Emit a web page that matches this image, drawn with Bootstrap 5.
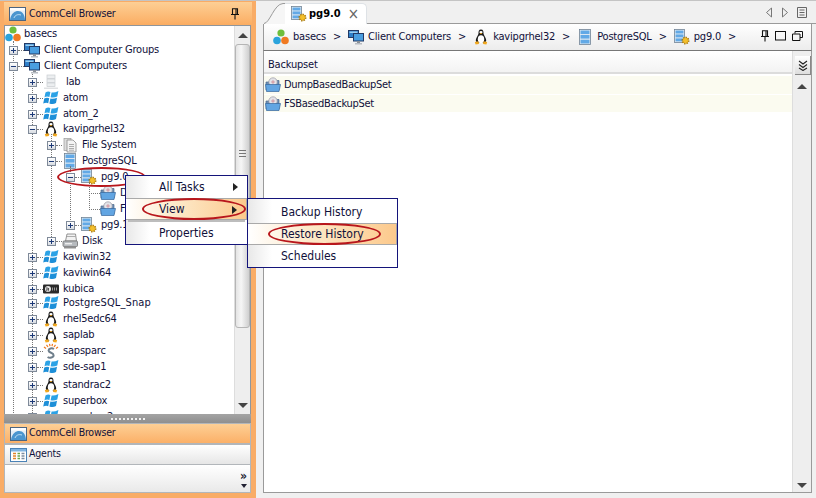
<!DOCTYPE html>
<html lang="en">
<head>
  <meta charset="UTF-8">
  <title>CommCell Browser</title>
  <link rel="stylesheet" href="https://cdn.jsdelivr.net/npm/bootstrap@5.3.0/dist/css/bootstrap.min.css">
  <style>
    body { margin: 0; background: #f0f0f0; font-family: "DejaVu Sans Condensed", "DejaVu Sans", sans-serif; font-stretch: condensed; font-size: 11px; color: #10103a; overflow: hidden; }
    .shell { width: 816px; height: 498px; position: relative; }
    .left-pane { width: 256px; height: 498px; background: #f9ac66; padding: 1px 5px 5px 4px; border-top: 1px solid #c4c4c4; }
    .pane-head { height: 23px; margin: 0 -1px 0 0; background: linear-gradient(#fdcf95, #fbad62); padding: 0 12px 0 5px; gap: 3px; color: #10103a; font-size: 10.5px; letter-spacing: -.2px; }
    .tree-box { height: 389px; background: #fff; border: 1px solid #8f959b; border-bottom: 0; overflow: hidden; }
    .tree-body { width: 230px; position: relative; overflow: hidden; }
    .tr-row { height: 16px; white-space: nowrap; letter-spacing: -.2px; }
    .up1 { margin-top: -1px; }
    .up2 { margin-top: -2px; letter-spacing: .1px; }
    .dn2 { margin-top: 2px; }
    .lv0 { padding-left: 0; }
    .lv1 { padding-left: 4px; }
    .lv2 { padding-left: 23px; }
    .lv3 { padding-left: 42px; }
    .lv4 { padding-left: 61px; }
    .lv5 { padding-left: 80px; }
    .tr-exp { width: 9px; height: 9px; flex: none; border: 1px solid #7f8a99; background: linear-gradient(#fff, #d8dce2); position: relative; }
    .tr-exp::before { content: ""; position: absolute; left: 1px; top: 3px; width: 5px; height: 1px; background: #1d3a78; }
    .tr-exp.plus::after { content: ""; position: absolute; left: 3px; top: 1px; width: 1px; height: 5px; background: #1d3a78; }
    .tr-dots { width: 6px; flex: none; border-top: 1px dotted #777; }
    .tr-none { width: 4px; flex: none; }
    .tr-none + .tr-dots { width: 11px; }
    .tr-ic { width: 16px; height: 16px; flex: none; }
    .tr-txt { margin-left: 4px; }
    .lv0 .tr-txt { margin-left: 3px; }
    .vline { position: absolute; width: 0; border-left: 1px dotted #777; }
    .vl-a { left: 8px; top: 15px; height: 376px; }
    .vl-b { left: 27px; top: 48px; height: 343px; }
    .vl-c { left: 46px; top: 108px; height: 107px; }
    .vl-d { left: 65px; top: 140px; height: 60px; }
    .vl-e { left: 84px; top: 157px; height: 27px; }
    .sbar { background: #eee; border-left: 1px solid #ddd; position: relative; }
    .left-bar { width: 16px; }
    .right-bar { width: 19px; }
    .tri-up, .tri-dn { width: 0; height: 0; border-left: 5px solid transparent; border-right: 5px solid transparent; position: absolute; left: 50%; margin-left: -5px; }
    .tri-up { border-bottom: 5px solid #444; }
    .tri-dn { border-top: 5px solid #444; }
    .left-bar .tri-up { top: 7px; }
    .left-bar .tri-dn { bottom: 6px; }
    .right-bar .tri-up { top: 33px; }
    .right-bar .tri-dn { bottom: 4px; }
    .sb-thumb { position: absolute; left: 0; right: 0; top: 18px; height: 284px; background: linear-gradient(90deg, #e4e4e4, #f6f6f6 40%, #cfcfcf); border: 1px solid #b5b5b5; border-radius: 3px; }
    .sb-grip { position: absolute; left: 3px; right: 3px; top: 105px; height: 7px; border-top: 1px solid #777; border-bottom: 1px solid #777; }
    .sb-grip::after { content: ""; position: absolute; left: 0; right: 0; top: 2px; height: 1px; background: #777; }
    .splitter { height: 9px; background: linear-gradient(#a4a4a4, #8f8f8f); gap: 2px; }
    .splitter i { width: 2px; height: 2px; background: #f2f2f2; }
    .side-list { margin-top: 0; border-radius: 0; }
    .side-list .list-group-item { height: 21px; padding: 0 0 0 5px; gap: 2px; border: 1px solid #b2b6ba; border-radius: 0; background: linear-gradient(#fff, #e6e6e6); color: #10103a; font-size: 10.5px; letter-spacing: -.2px; }
    .side-list .list-group-item.active { background: linear-gradient(#fdcf95, #fbb068); margin-top: 0; }
    .side-list .list-group-item + .list-group-item { border-top-width: 1px; margin-top: 0; }
    .side-txt { margin-bottom: 2px; }
    .side-foot { flex: 1; background: linear-gradient(#fff, #e9e9e9); border: 1px solid #b2b6ba; border-top: 0; position: relative; }
    .more-mark { position: absolute; right: 0; top: 7px; width: 13px; line-height: 9px; font-size: 12px; font-weight: bold; text-align: center; color: #223; }
    .more-mark .tri-dn { border-left-width: 3px; border-right-width: 3px; border-top: 4px solid #223; margin-left: -3px; top: 12px; }
    .right-pane { width: 560px; padding: 0 4px 5px 7px; border-top: 1px solid #c4c4c4; }
    .tab-strip { height: 23px; margin-left: 1px; border-bottom: 1px solid #9a9a9a; margin-right: -4px; padding-right: 9px; }
    .tab-strip .nav-tabs { border: 0; flex: none; }
    .tab-slant { width: 21px; height: 23px; flex: none; margin-bottom: -1px; }
    .tab-strip .nav-link { height: 21px; margin-bottom: -1px; padding: 0 0 0 6px; gap: 2px; border: 1px solid #9a9a9a; border-left: 0; border-bottom: 0; border-radius: 0 5px 0 0; background: #f6f6f6; font-weight: bold; font-size: 11px; color: #10103a; width: 82px; margin-top: 2px; }
    .tab-x { font-size: 15px; font-weight: normal; color: #666; margin-left: 5px; line-height: 1; }
    .tab-tools { gap: 8px; }
    .crumb-bar { height: 27px; border: 1px solid #9a9a9a; border-top: 0; border-bottom: 1px solid #777; background: linear-gradient(#fff, #ececec); padding: 0 8px 0 9px; }
    .crumb-bar .breadcrumb { --bs-breadcrumb-divider: ">"; --bs-breadcrumb-margin-bottom: 0; --bs-breadcrumb-item-padding-x: 7px; font-size: 11px; letter-spacing: -.2px; }
    .crumb-bar .breadcrumb-item { gap: 4px; color: #10103a; white-space: nowrap; }
    .crumb-bar .breadcrumb-item + .breadcrumb-item::before { color: #10103a; padding-right: 3px; }
    .bar-tools { gap: 5px; margin-bottom: 2px; }
    .grid-box { flex: 1; background: #fff; border: 1px solid #9a9a9a; border-top: 0; min-height: 0; }
    .grid-main { flex: 1; min-width: 0; }
    .grid-head { height: 23px; margin-bottom: 2px; padding: 7px 0 0 4px; background: linear-gradient(#fff, #f3f3f3); border-bottom: 2px solid #dcdcdc; letter-spacing: -.2px; }
    .grid-main .table { --bs-table-bg: #fbfbf0; --bs-table-border-color: #fff; margin: 0; font-size: 11px; color: #10103a; letter-spacing: -.3px; }
    .grid-main .table td { height: 18px; padding: 1px 0 0 1px; border-bottom: 1px solid #fff; border-top: 0; vertical-align: middle; color: #10103a; }
    .row-inner { gap: 3px; }
    .corner-btn { position: absolute; right: 0; top: 5px; width: 16px; height: 19px; background: linear-gradient(#fff, #ddd); border-right: 1px solid #888; border-bottom: 1px solid #888; }
    .pop-menu.dropdown-menu { --bs-dropdown-min-width: 0; --bs-dropdown-padding-y: 0; --bs-dropdown-border-radius: 0; --bs-dropdown-border-color: #14147a; --bs-dropdown-border-width: 1px; --bs-dropdown-font-size: 12px; --bs-dropdown-color: #10103a; --bs-dropdown-link-color: #10103a; --bs-dropdown-divider-margin-y: 1px; background: linear-gradient(90deg, #e8e8e8, #fff 24px); margin: 0; box-shadow: none; }
    .pop-a { position: absolute; left: 125px; top: 175px; width: 123px; height: 70px; z-index: 3; }
    .pop-b { position: absolute; left: 247px; top: 198px; width: 151px; height: 70px; z-index: 4; padding-top: 2px; }
    .pop-menu .dropdown-item { height: 22px; padding: 0 0 0 33px; background: transparent; position: relative; font-size: 12px; color: #10103a; }
    .pop-menu .dropdown-item.active { background: linear-gradient(90deg, #ffffff, #fdeacb 40%, #fcc98c); border: 1px solid #a9a9a9; border-left: 0; color: #10103a; margin-right: 2px; }
    .pop-menu hr.dropdown-divider { margin: 0 2px; border-top: 2px solid #bdbdbd; opacity: 1; }
    .sub-tri { position: absolute; right: 9px; top: 7px; width: 0; height: 0; border-top: 4px solid transparent; border-bottom: 4px solid transparent; border-left: 5px solid #222; }
    .red-ring { position: absolute; border: 2px solid #b8161c; border-radius: 50%; z-index: 5; pointer-events: none; }
    .ring-a { left: 57px; top: 167px; width: 89px; height: 20px; z-index: 2; }
    .ring-b { left: 142px; top: 198px; width: 104px; height: 22px; }
    .ring-c { left: 268px; top: 223px; width: 113px; height: 22px; }
  </style>
</head>
<body>
  <svg width="0" height="0" class="position-absolute">
    <defs>
      <symbol id="i-cv" viewBox="0 0 16 16">
        <circle cx="8" cy="4" r="3.6" fill="#6fbe3c"/>
        <circle cx="4" cy="11.5" r="3.8" fill="#2aa3dc"/>
        <circle cx="12" cy="11.5" r="3.8" fill="#f07a22"/>
      </symbol>
      <symbol id="i-pcs" viewBox="0 0 16 16">
        <rect x="0.5" y="1.5" width="10" height="7" fill="#2f7fc8" stroke="#223a66"/>
        <rect x="5.5" y="4.5" width="10" height="7.5" fill="#4a9ee0" stroke="#223a66"/>
        <rect x="9" y="12" width="3" height="2" fill="#8a9098"/>
        <rect x="7" y="14" width="7" height="1.5" fill="#b8bcc2"/>
        <rect x="1.5" y="2.5" width="8" height="1.5" fill="#9cd0f2"/>
      </symbol>
      <symbol id="i-srv" viewBox="0 0 16 16">
        <rect x="4" y="1" width="8" height="3.5" fill="#eceef0" stroke="#c9cdd1" stroke-width=".7"/>
        <rect x="4" y="5" width="8" height="3.5" fill="#eceef0" stroke="#c9cdd1" stroke-width=".7"/>
        <rect x="4" y="9" width="8" height="3.5" fill="#eceef0" stroke="#c9cdd1" stroke-width=".7"/>
        <rect x="1" y="13.5" width="14" height="1.5" fill="#dfe1e3"/>
      </symbol>
      <symbol id="i-win" viewBox="0 0 16 16">
        <path d="M2.5 2.5 Q5 1 7.4 2 L6.4 7 Q4 6 1.5 7.2Z" fill="#2ba2e6"/>
        <path d="M8.6 2.4 Q11 3.2 15.4 1 L14.3 6.4 Q11 8 7.6 7.2Z" fill="#2ba2e6"/>
        <path d="M1.3 8.4 Q4 7.2 6.2 8.2 L5.2 13.2 Q3 12.2 0.2 13.6Z" fill="#1d8fd8"/>
        <path d="M7.4 8.5 Q11 9.2 14 7.7 L13 13 Q10 14.6 6.4 13.4Z" fill="#1d8fd8"/>
      </symbol>
      <symbol id="i-tux" viewBox="0 0 16 16">
        <path d="M8 .5 C5.8 .5 5.4 2.4 5.5 4.4 C5.5 6 3 8.4 2.8 11 C2.7 12.6 4 14 8 14 C12 14 13.3 12.6 13.2 11 C13 8.4 10.5 6 10.5 4.4 C10.6 2.4 10.2 .5 8 .5Z" fill="#1a1a1a"/>
        <ellipse cx="8" cy="10.2" rx="3.2" ry="4" fill="#fff"/>
        <ellipse cx="8" cy="3.2" rx="1.6" ry="1.1" fill="#fff"/>
        <path d="M6.6 4 L9.4 4 L8 5.2Z" fill="#f2a81d"/>
        <path d="M1.8 13 L5.4 12.2 L6 15 L2.6 15.6Z M14.2 13 L10.6 12.2 L10 15 L13.4 15.6Z" fill="#f2a81d"/>
      </symbol>
      <symbol id="i-fs" viewBox="0 0 16 16">
        <rect x="2" y="1.5" width="7" height="12" fill="#dcdcdc" stroke="#9a9a9a" stroke-width=".7"/>
        <path d="M5 3 H11 L14 6 V15 H5Z" fill="#f4f4f4" stroke="#8a8a8a" stroke-width=".8"/>
        <path d="M7 7.5 H12 M7 9.5 H12 M7 11.5 H12 M7 13.2 H12" stroke="#9a9a9a" stroke-width=".8"/>
      </symbol>
      <symbol id="i-db" viewBox="0 0 16 16">
        <rect x="2.5" y=".5" width="11" height="15" fill="#e9eef3" stroke="#6f8396" stroke-width=".8"/>
        <rect x="3.5" y="1.5" width="9" height="3.6" fill="#62a9e6"/>
        <rect x="3.5" y="6" width="9" height="3.6" fill="#62a9e6"/>
        <rect x="3.5" y="10.7" width="9" height="3.8" fill="#62a9e6"/>
      </symbol>
      <symbol id="i-dbg" viewBox="0 0 16 16">
        <rect x=".5" y=".5" width="10" height="13" fill="#e9eef3" stroke="#6f8396" stroke-width=".8"/>
        <rect x="1.5" y="1.5" width="8" height="3" fill="#62a9e6"/>
        <rect x="1.5" y="5.4" width="8" height="3" fill="#62a9e6"/>
        <rect x="1.5" y="9.4" width="8" height="3" fill="#62a9e6"/>
        <circle cx="11.5" cy="11.5" r="3" fill="#eeb21c" stroke="#a97a0c" stroke-width="2" stroke-dasharray="1.3 1"/>
        <circle cx="11.5" cy="11.5" r="2.4" fill="#f3bf2c"/>
      </symbol>
      <symbol id="i-bk" viewBox="0 0 16 16">
        <path d="M1 5 H4 L5 3.5 H14 V13 H1Z" fill="#6d8fb5" stroke="#4d6a8c" stroke-width=".7"/>
        <circle cx="8" cy="5" r="4.2" fill="#e3e3e8" stroke="#9a9aa4" stroke-width=".7"/>
        <circle cx="8" cy="5" r="1.1" fill="#fff" stroke="#b04a5a" stroke-width=".6"/>
        <path d="M.5 7.5 H15.5 L14 14.5 H1.5Z" fill="#62a5e2" stroke="#37659b" stroke-width=".7"/>
      </symbol>
      <symbol id="i-disk" viewBox="0 0 16 16">
        <path d="M5 1 H13.5 L14.5 8 H3.5Z" fill="#f2f2f2" stroke="#7b7b7b" stroke-width=".8"/>
        <path d="M5 3.5 H13.5" stroke="#9b9b9b" stroke-width=".8"/>
        <rect x="1" y="8" width="14.5" height="5.5" rx="1" fill="#b7bbbf" stroke="#6f6f6f" stroke-width=".8"/>
        <rect x="2" y="13.5" width="12" height="2" fill="#8f8f8f"/>
        <rect x="3" y="10" width="7" height="1.4" fill="#eee"/>
      </symbol>
      <symbol id="i-hp" viewBox="0 0 16 16">
        <rect x="0" y="3.5" width="16" height="9" rx="1" fill="#2a2a2a"/>
        <circle cx="5" cy="8" r="3" fill="#e8e8e8"/>
        <path d="M4 6 L3.6 10 M5.6 7 L5.2 10.4 M4 8 H6" stroke="#2a2a2a" stroke-width=".7" fill="none"/>
        <path d="M9.5 6.5 V9.5 M11.5 6.5 V9.5 M13.5 6.5 V9.5" stroke="#bbb" stroke-width=".8"/>
      </symbol>
      <symbol id="i-sap" viewBox="0 0 16 16">
        <path d="M1 4 L3 5.5 M3.5 1.8 L5 4 M6.5 .8 L7 3.2 M9.5 .8 L9 3.2 M12.5 1.8 L11 4 M15 4 L13 5.5" stroke="#ee7a22" stroke-width="1.2"/>
        <path d="M11 6 C9 4.8 5.5 5.2 5.6 7.6 C5.8 10 10.6 9.6 10.6 12.2 C10.6 14.6 6.6 15.4 4.6 14" fill="none" stroke="#6f7f8c" stroke-width="2"/>
      </symbol>
      <symbol id="i-head" viewBox="0 0 17 15">
        <rect x=".5" y="1.5" width="16" height="13" fill="#e6eef5" stroke="#4c6580"/>
        <rect x="1" y="2" width="15" height="2.5" fill="#fff"/>
        <path d="M1 14 C2 7 6 5 9 5 C13 5 15.5 8 16 14Z" fill="#4a95cf"/>
        <path d="M5 12 C6 9 9 8 12 9" stroke="#bfe0f5" fill="none"/>
      </symbol>
      <symbol id="i-agents" viewBox="0 0 17 14">
        <rect x=".5" y=".5" width="16" height="13" fill="#fff" stroke="#4a82b6"/>
        <rect x="1" y="1" width="15" height="2.5" fill="#7fb4e2"/>
        <path d="M3 5.5 H6 M3 8 H6 M3 10.5 H6" stroke="#e0842e" stroke-width="1.4"/>
        <path d="M7.5 5.5 H10 M7.5 8 H10 M7.5 10.5 H10" stroke="#6ca54a" stroke-width="1.4"/>
        <path d="M11.5 5.5 H14.5 M11.5 8 H14.5 M11.5 10.5 H14.5" stroke="#7d8da0" stroke-width="1.4"/>
      </symbol>
      <symbol id="i-pin" viewBox="0 0 10 12">
        <path d="M2.5 .8 H7.5 V6.5 H2.5Z M1 6.5 H9 M5 6.5 V11.5 M6 1 V6" fill="none" stroke="#111" stroke-width="1.1"/>
      </symbol>
    </defs>
  </svg>

  <div class="shell d-flex">
    <div class="left-pane d-flex flex-column flex-none">
      <div class="pane-head d-flex align-items-center">
        <svg width="17" height="15"><use href="#i-head"/></svg>
        <span class="flex-grow-1">CommCell Browser</span>
        <svg width="10" height="12"><use href="#i-pin"/></svg>
      </div>
      <div class="tree-box d-flex">
        <div class="tree-body flex-grow-1">
          <span class="vline vl-a"></span><span class="vline vl-b"></span><span class="vline vl-c"></span><span class="vline vl-d"></span><span class="vline vl-e"></span>
          <div class="tr-row lv0 d-flex align-items-center"><svg class="tr-ic"><use href="#i-cv"/></svg><span class="tr-txt">basecs</span></div>
          <div class="tr-row lv1 d-flex align-items-center"><span class="tr-exp plus"></span><span class="tr-dots"></span><svg class="tr-ic"><use href="#i-pcs"/></svg><span class="tr-txt">Client Computer Groups</span></div>
          <div class="tr-row lv1 d-flex align-items-center"><span class="tr-exp"></span><span class="tr-dots"></span><svg class="tr-ic"><use href="#i-pcs"/></svg><span class="tr-txt">Client Computers</span></div>
          <div class="tr-row lv2 d-flex align-items-center"><span class="tr-exp plus"></span><span class="tr-dots"></span><svg class="tr-ic"><use href="#i-srv"/></svg><span class="tr-txt">&nbsp;lab</span></div>
          <div class="tr-row lv2 d-flex align-items-center"><span class="tr-exp plus"></span><span class="tr-dots"></span><svg class="tr-ic"><use href="#i-win"/></svg><span class="tr-txt">atom</span></div>
          <div class="tr-row lv2 d-flex align-items-center"><span class="tr-exp plus"></span><span class="tr-dots"></span><svg class="tr-ic"><use href="#i-win"/></svg><span class="tr-txt">atom_2</span></div>
          <div class="tr-row up1 lv2 d-flex align-items-center"><span class="tr-exp"></span><span class="tr-dots"></span><svg class="tr-ic"><use href="#i-tux"/></svg><span class="tr-txt">kavipgrhel32</span></div>
          <div class="tr-row lv3 d-flex align-items-center"><span class="tr-exp plus"></span><span class="tr-dots"></span><svg class="tr-ic"><use href="#i-fs"/></svg><span class="tr-txt">File System</span></div>
          <div class="tr-row lv3 d-flex align-items-center"><span class="tr-exp"></span><span class="tr-dots"></span><svg class="tr-ic"><use href="#i-db"/></svg><span class="tr-txt">PostgreSQL</span></div>
          <div class="tr-row lv4 d-flex align-items-center"><span class="tr-exp"></span><span class="tr-dots"></span><svg class="tr-ic"><use href="#i-dbg"/></svg><span class="tr-txt">pg9.0</span></div>
          <div class="tr-row lv5 d-flex align-items-center"><span class="tr-none"></span><span class="tr-dots"></span><svg class="tr-ic"><use href="#i-bk"/></svg><span class="tr-txt">DumpBasedBackupSet</span></div>
          <div class="tr-row lv5 d-flex align-items-center"><span class="tr-none"></span><span class="tr-dots"></span><svg class="tr-ic"><use href="#i-bk"/></svg><span class="tr-txt">FSBasedBackupSet</span></div>
          <div class="tr-row lv4 d-flex align-items-center"><span class="tr-exp plus"></span><span class="tr-dots"></span><svg class="tr-ic"><use href="#i-dbg"/></svg><span class="tr-txt">pg9.1</span></div>
          <div class="tr-row lv3 d-flex align-items-center"><span class="tr-exp plus"></span><span class="tr-dots"></span><svg class="tr-ic"><use href="#i-disk"/></svg><span class="tr-txt">Disk</span></div>
          <div class="tr-row lv2 d-flex align-items-center"><span class="tr-exp plus"></span><span class="tr-dots"></span><svg class="tr-ic"><use href="#i-win"/></svg><span class="tr-txt">kaviwin32</span></div>
          <div class="tr-row lv2 d-flex align-items-center"><span class="tr-exp plus"></span><span class="tr-dots"></span><svg class="tr-ic"><use href="#i-win"/></svg><span class="tr-txt">kaviwin64</span></div>
          <div class="tr-row lv2 d-flex align-items-center"><span class="tr-exp plus"></span><span class="tr-dots"></span><svg class="tr-ic"><use href="#i-hp"/></svg><span class="tr-txt">kubica</span></div>
          <div class="tr-row up2 lv2 d-flex align-items-center"><span class="tr-exp plus"></span><span class="tr-dots"></span><svg class="tr-ic"><use href="#i-win"/></svg><span class="tr-txt">PostgreSQL_Snap</span></div>
          <div class="tr-row lv2 d-flex align-items-center"><span class="tr-exp plus"></span><span class="tr-dots"></span><svg class="tr-ic"><use href="#i-tux"/></svg><span class="tr-txt">rhel5edc64</span></div>
          <div class="tr-row lv2 d-flex align-items-center"><span class="tr-exp plus"></span><span class="tr-dots"></span><svg class="tr-ic"><use href="#i-tux"/></svg><span class="tr-txt">saplab</span></div>
          <div class="tr-row lv2 d-flex align-items-center"><span class="tr-exp plus"></span><span class="tr-dots"></span><svg class="tr-ic"><use href="#i-sap"/></svg><span class="tr-txt">sapsparc</span></div>
          <div class="tr-row lv2 d-flex align-items-center"><span class="tr-exp plus"></span><span class="tr-dots"></span><svg class="tr-ic"><use href="#i-win"/></svg><span class="tr-txt">sde-sap1</span></div>
          <div class="tr-row dn2 lv2 d-flex align-items-center"><span class="tr-exp plus"></span><span class="tr-dots"></span><svg class="tr-ic"><use href="#i-tux"/></svg><span class="tr-txt">standrac2</span></div>
          <div class="tr-row lv2 d-flex align-items-center"><span class="tr-exp plus"></span><span class="tr-dots"></span><svg class="tr-ic"><use href="#i-win"/></svg><span class="tr-txt">superbox</span></div>
          <div class="tr-row lv2 d-flex align-items-center"><span class="tr-exp plus"></span><span class="tr-dots"></span><svg class="tr-ic"><use href="#i-win"/></svg><span class="tr-txt">superbox2</span></div>
        </div>
        <div class="sbar left-bar">
          <span class="tri-up"></span>
          <div class="sb-thumb"><div class="sb-grip"></div></div>
          <span class="tri-dn"></span>
        </div>
      </div>
      <div class="splitter d-flex align-items-center justify-content-center"><i></i><i></i><i></i><i></i><i></i><i></i><i></i><i></i><i></i></div>
      <div class="list-group side-list">
        <div class="list-group-item active d-flex align-items-center"><svg width="17" height="15"><use href="#i-head"/></svg><span class="side-txt">CommCell Browser</span></div>
        <div class="list-group-item d-flex align-items-center"><svg width="17" height="14"><use href="#i-agents"/></svg><span class="side-txt">Agents</span></div>
      </div>
      <div class="side-foot">
        <div class="more-mark">&raquo;<span class="tri-dn"></span></div>
      </div>
    </div>

    <div class="right-pane d-flex flex-column flex-grow-1">
      <div class="tab-strip d-flex justify-content-between">
        <div class="d-flex">
          <svg class="tab-slant" viewBox="0 0 21 23"><path d="M0 22.5 C6 22 10 3 19 2.5 H21 V23 H0Z" fill="#f6f6f6"/><path d="M0 22.5 C6 22 10 3 19 2.5 H21" fill="none" stroke="#9a9a9a"/></svg>
          <ul class="nav nav-tabs">
            <li class="nav-item"><a class="nav-link active d-flex align-items-center" href="#"><svg class="tr-ic"><use href="#i-dbg"/></svg>pg9.0<span class="tab-x">&times;</span></a></li>
          </ul>
        </div>
        <div class="tab-tools d-flex align-items-center">
          <svg width="8" height="11" viewBox="0 0 8 11"><path d="M6.5 1 L1.5 5.5 L6.5 10Z" fill="none" stroke="#777"/></svg>
          <svg width="8" height="11" viewBox="0 0 8 11"><path d="M1.5 1 L6.5 5.5 L1.5 10Z" fill="none" stroke="#777"/></svg>
          <svg width="10" height="11" viewBox="0 0 10 11"><path d="M.5 .5 H9.5 V10.5 H.5Z M2.5 3 H7.5 M2.5 5.5 H7.5 M2.5 8 H7.5" fill="none" stroke="#666"/></svg>
        </div>
      </div>
      <div class="crumb-bar d-flex align-items-center justify-content-between">
        <ol class="breadcrumb flex-nowrap">
          <li class="breadcrumb-item d-flex align-items-center"><svg class="tr-ic"><use href="#i-cv"/></svg>basecs</li>
          <li class="breadcrumb-item d-flex align-items-center"><svg class="tr-ic"><use href="#i-pcs"/></svg>Client Computers</li>
          <li class="breadcrumb-item d-flex align-items-center"><svg class="tr-ic"><use href="#i-tux"/></svg>kavipgrhel32</li>
          <li class="breadcrumb-item d-flex align-items-center"><svg class="tr-ic"><use href="#i-db"/></svg>PostgreSQL</li>
          <li class="breadcrumb-item d-flex align-items-center"><svg class="tr-ic"><use href="#i-dbg"/></svg>pg9.0</li>
          <li class="breadcrumb-item d-flex align-items-center"></li>
        </ol>
        <div class="bar-tools d-flex align-items-center">
          <svg width="10" height="12"><use href="#i-pin"/></svg>
          <svg width="12" height="10" viewBox="0 0 12 10"><rect x=".5" y=".5" width="10" height="8.5" fill="none" stroke="#111" stroke-width="1"/></svg>
          <svg width="11" height="10" viewBox="0 0 11 10"><path d="M3 2.5 V.5 H10.5 V6.5 H8 M.5 3 H8 V9.5 H.5Z" fill="none" stroke="#111"/></svg>
        </div>
      </div>
      <div class="grid-box d-flex position-relative">
        <div class="grid-main">
          <div class="grid-head d-flex align-items-center">Backupset</div>
          <table class="table">
            <tbody>
              <tr><td><div class="row-inner d-flex align-items-center"><svg class="tr-ic"><use href="#i-bk"/></svg>DumpBasedBackupSet</div></td></tr>
              <tr><td><div class="row-inner d-flex align-items-center"><svg class="tr-ic"><use href="#i-bk"/></svg>FSBasedBackupSet</div></td></tr>
            </tbody>
          </table>
        </div>
        <div class="sbar right-bar">
          <span class="tri-up"></span>
          <span class="tri-dn"></span>
        </div>
        <div class="corner-btn d-flex align-items-center justify-content-center">
          <svg width="10" height="11" viewBox="0 0 10 11"><path d="M1 1 L5 4 L9 1 M1 4.5 L5 7.5 L9 4.5 M1 8 L5 10.5 L9 8" fill="none" stroke="#222" stroke-width="1.1"/></svg>
        </div>
      </div>
    </div>

    <span class="red-ring ring-a"></span>
    <div class="dropdown-menu show pop-menu pop-a">
      <a class="dropdown-item d-flex align-items-center" href="#">All Tasks<span class="sub-tri"></span></a>
      <a class="dropdown-item active d-flex align-items-center" href="#">View<span class="sub-tri"></span></a>
      <hr class="dropdown-divider">
      <a class="dropdown-item d-flex align-items-center" href="#">Properties</a>
    </div>
    <span class="red-ring ring-b"></span>
    <div class="dropdown-menu show pop-menu pop-b">
      <a class="dropdown-item d-flex align-items-center" href="#">Backup History</a>
      <a class="dropdown-item active d-flex align-items-center" href="#">Restore History</a>
      <a class="dropdown-item d-flex align-items-center" href="#">Schedules</a>
    </div>
    <span class="red-ring ring-c"></span>
  </div>
  <script src="https://cdn.jsdelivr.net/npm/bootstrap@5.3.0/dist/js/bootstrap.bundle.min.js"></script>
</body>
</html>
